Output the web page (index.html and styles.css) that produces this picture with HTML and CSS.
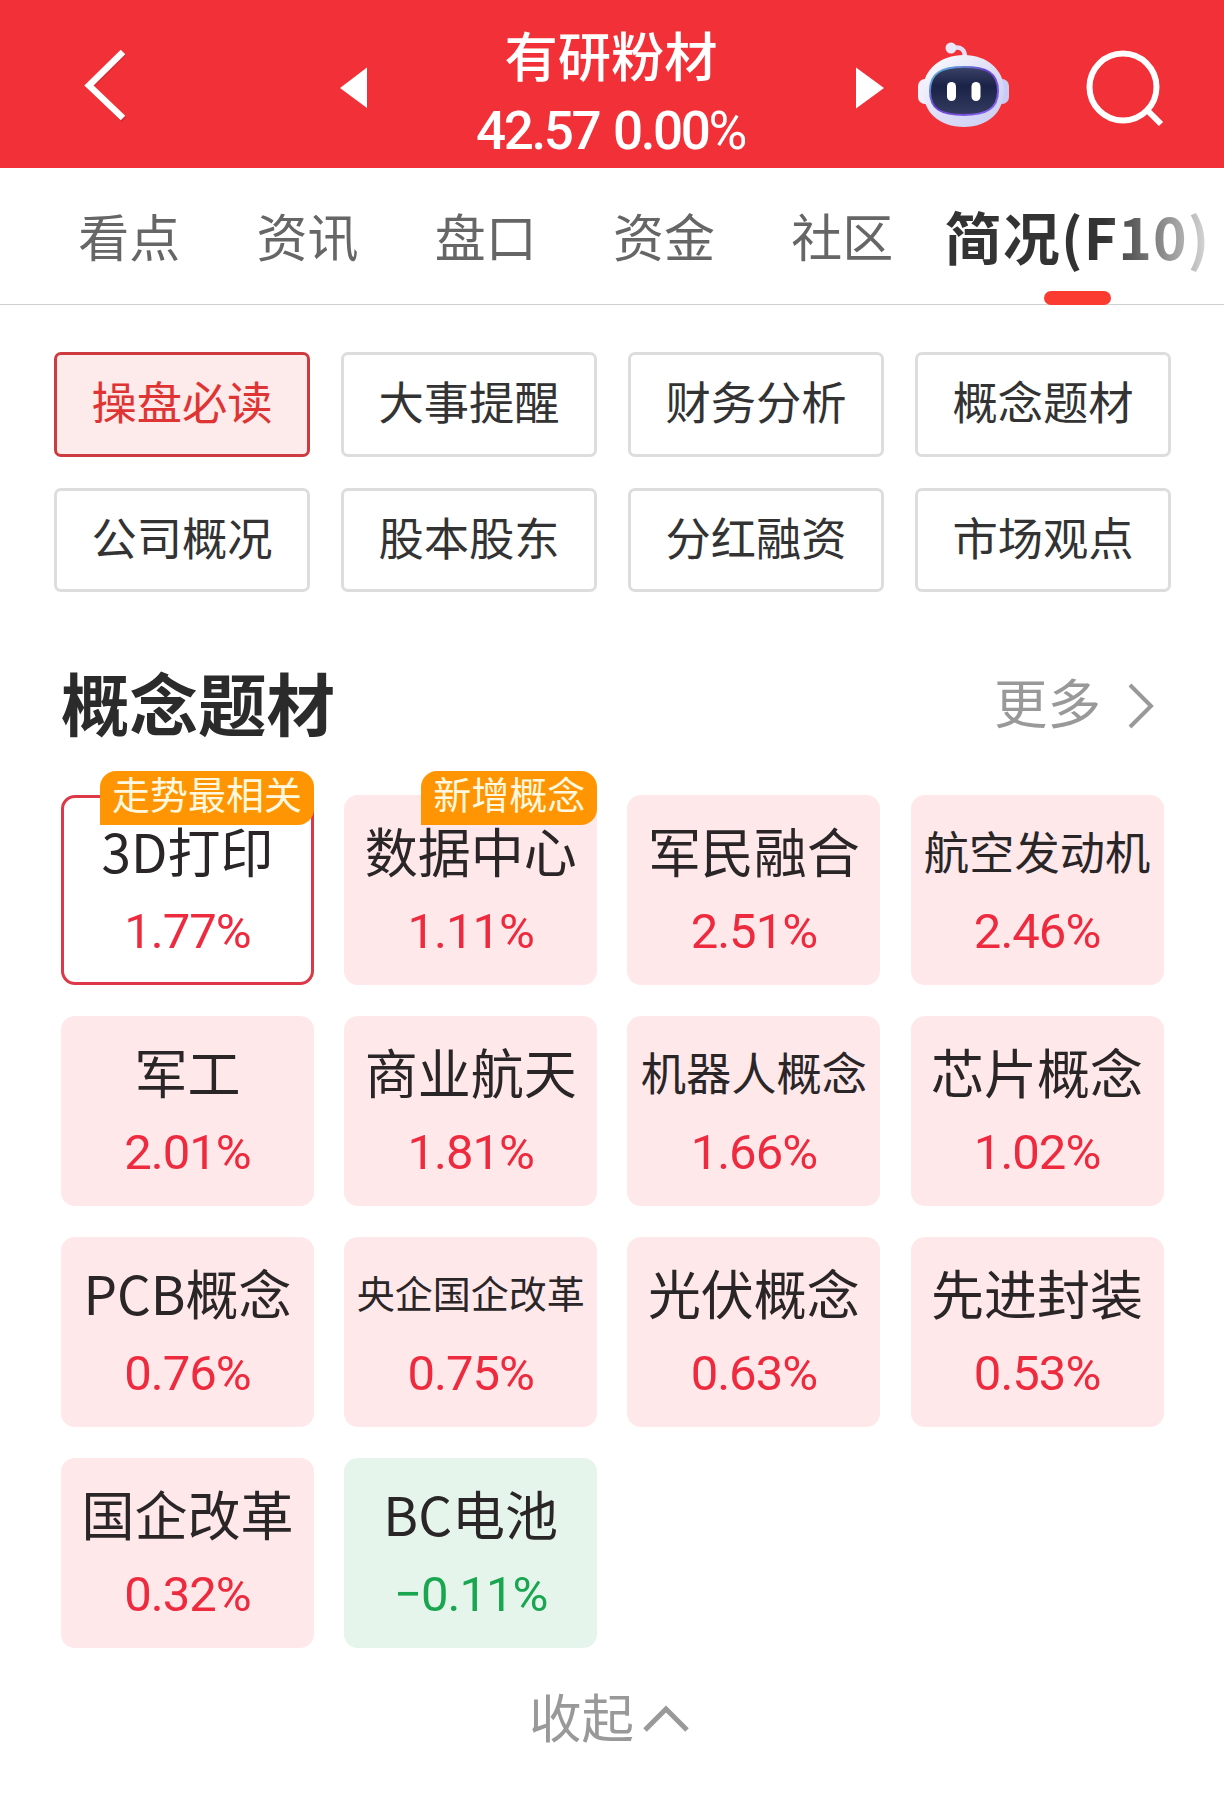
FILE: index.html
```html
<!DOCTYPE html>
<html lang="zh-CN">
  <head>
    <meta charset="UTF-8" />
    <meta name="viewport" content="width=device-width, initial-scale=1.0" />
    <title>有研粉材 - 简况(F10)</title>
    <link rel="stylesheet" href="styles.css">
  </head>

  <body>
    <header class="topbar">
      <svg class="back" width="50" height="80" viewBox="0 0 50 80">
        <path d="M43 11L9 45L43 78" transform="translate(1 -1)" fill="none" stroke="#b5262d" stroke-opacity=".5" stroke-width="6" />
        <path d="M43 9L9 42.500L43 75" fill="none" stroke="#fff" stroke-width="6.500" />
      </svg>
      <svg class="prev" width="28" height="42" viewBox="0 0 28 42"><path d="M27 0.500V41L0 21Z" fill="#fff" /></svg>
      <div class="stock">
        <div class="stock-name">有研粉材</div>
        <div class="stock-price">42.57 0.00<span>%</span></div>
      </div>
      <svg class="next" width="28" height="42" viewBox="0 0 28 42"><path d="M0 0.500V41.500L28 21Z" fill="#fff" /></svg>
      <svg class="robot" width="94" height="86" viewBox="0 0 94 86">
        <defs>
          <linearGradient id="shell" x1="0" y1="0" x2="1" y2="1">
            <stop offset="0" stop-color="#fff" />
            <stop offset=".55" stop-color="#dcdcf6" />
            <stop offset="1" stop-color="#c9cdf2" />
          </linearGradient>
          <linearGradient id="face" x1="0" y1="0" x2="0" y2="1">
            <stop offset="0" stop-color="#3a4266" />
            <stop offset=".4" stop-color="#1a2347" />
            <stop offset="1" stop-color="#343c60" />
          </linearGradient>
          <linearGradient id="rim" x1="0" y1="0" x2="1" y2="1">
            <stop offset="0" stop-color="#5cc9dc" />
            <stop offset=".45" stop-color="#6a3fd0" />
            <stop offset="1" stop-color="#8a68ee" />
          </linearGradient>
        </defs>
        <path d="M36 6C44 4 48 8 48 15" fill="none" stroke="#e3dff5" stroke-width="4.500" />
        <circle cx="34" cy="6" r="5.500" fill="#ebe6f8" />
        <rect x="1" y="37" width="16" height="25" rx="7" fill="#f1effc" />
        <rect x="76" y="37" width="16" height="25" rx="7" fill="#c9ccf4" />
        <path d="M47 13C70 13 87 28 87 48C87 70 71 85 47 85C22 85 6 70 6 48C6 28 23 13 47 13Z" fill="url(#shell)" />
        <path d="M47 25C70 25 81 31 81 49C81 67 69 73 47 73C24 73 13 67 13 49C13 31 24 25 47 25Z" fill="url(#face)" stroke="url(#rim)" stroke-width="2" />
        <rect x="30" y="40" width="9" height="19" rx="4.500" fill="#fff" />
        <rect x="54.500" y="40" width="9" height="19" rx="4.500" fill="#fff" />
      </svg>
      <svg class="search" width="80" height="80" viewBox="0 0 80 80" fill="none" stroke="#fff" stroke-width="6">
        <circle cx="37" cy="37" r="33.500" />
        <path d="M61 60L75 74" />
      </svg>
    </header>

    <nav class="tabs">
      <a class="tab">看点</a>
      <a class="tab">资讯</a>
      <a class="tab">盘口</a>
      <a class="tab">资金</a>
      <a class="tab">社区</a>
      <a class="tab active"><span>简况(F10)</span></a>
    </nav>

    <div class="subnav">
      <a class="active">操盘必读</a>
      <a>大事提醒</a>
      <a>财务分析</a>
      <a>概念题材</a>
      <a>公司概况</a>
      <a>股本股东</a>
      <a>分红融资</a>
      <a>市场观点</a>
    </div>

    <section class="concepts">
      <div class="section-head">
        <h2>概念题材</h2>
        <a class="more">更多
          <svg width="28" height="48" viewBox="0 0 28 48"><path d="M3 4L24 25L3 46" fill="none" stroke="#999" stroke-width="4" /></svg>
        </a>
      </div>

      <div class="grid">
        <div class="card related">
          <em class="badge">走势最相关</em>
          <div class="name">3D打印</div>
          <div class="rate">1.77<span>%</span></div>
        </div>
        <div class="card">
          <em class="badge">新增概念</em>
          <div class="name">数据中心</div>
          <div class="rate">1.11<span>%</span></div>
        </div>
        <div class="card">
          <div class="name">军民融合</div>
          <div class="rate">2.51<span>%</span></div>
        </div>
        <div class="card">
          <div class="name medium">航空发动机</div>
          <div class="rate">2.46<span>%</span></div>
        </div>
        <div class="card">
          <div class="name">军工</div>
          <div class="rate">2.01<span>%</span></div>
        </div>
        <div class="card">
          <div class="name">商业航天</div>
          <div class="rate">1.81<span>%</span></div>
        </div>
        <div class="card">
          <div class="name medium">机器人概念</div>
          <div class="rate">1.66<span>%</span></div>
        </div>
        <div class="card">
          <div class="name">芯片概念</div>
          <div class="rate">1.02<span>%</span></div>
        </div>
        <div class="card">
          <div class="name">PCB概念</div>
          <div class="rate">0.76<span>%</span></div>
        </div>
        <div class="card">
          <div class="name small">央企国企改革</div>
          <div class="rate">0.75<span>%</span></div>
        </div>
        <div class="card">
          <div class="name">光伏概念</div>
          <div class="rate">0.63<span>%</span></div>
        </div>
        <div class="card">
          <div class="name">先进封装</div>
          <div class="rate">0.53<span>%</span></div>
        </div>
        <div class="card">
          <div class="name">国企改革</div>
          <div class="rate">0.32<span>%</span></div>
        </div>
        <div class="card down">
          <div class="name">BC电池</div>
          <div class="rate">−0.11<span>%</span></div>
        </div>
      </div>

      <div class="collapse">收起
        <svg width="46" height="30" viewBox="0 0 46 30"><path d="M2 27L23 6L44 27" fill="none" stroke="#999" stroke-width="5" /></svg>
      </div>
    </section>
  </body>
</html>
```
FILE: styles.css
```css
* {
  box-sizing: border-box;
}

body {
  margin: 0;
  background-color: #fff;
  font-family: "Noto Sans CJK SC", sans-serif;
  color: #333;
}

/* top bar */
.topbar {
  display: flex;
  align-items: flex-start;
  height: 168px;
  background-color: #f23037;
  color: #fff;
}
.topbar svg {
  flex: none;
}
.back {
  margin: 43px 0 0 80px;
}
.prev {
  margin: 67px 0 0 210px;
}
.stock {
  width: 488px;
  text-align: center;
}
.stock-name {
  font-size: 53.3px;
  font-weight: 500;
  line-height: 60px;
  margin-top: 24px;
  padding-right: 2px;
}
.stock-price {
  font-family: Roboto, sans-serif;
  font-size: 53px;
  font-weight: 500;
  line-height: 60px;
  margin-top: 17px;
  padding-right: 3px;
  letter-spacing: -2.4px;
  word-spacing: 3px;
}
.stock-price span {
  font-weight: 400;
}
.next {
  margin-top: 67px;
}
.robot {
  margin: 42px 0 0 33px;
}
.search {
  margin: 50px 0 0 75px;
}

/* tabs */
.tabs {
  display: flex;
  height: 137px;
  padding-left: 40px;
  border-bottom: 1px solid #cfcfcf;
}
.tab {
  flex: none;
  width: 178.3px;
  text-align: center;
  font-size: 51px;
  line-height: 134px;
  color: #666;
}
.tab.active {
  position: relative;
  width: 292px;
  padding-left: 13px;
  text-align: left;
  font-size: 57px;
  font-weight: 700;
  letter-spacing: 1.2px;
}
.tab.active span {
  background: linear-gradient(to right, #333 60%, #666 73%, #999 85%, #ddd 100%);
  -webkit-background-clip: text;
  background-clip: text;
  color: transparent;
}
.tab.active::after {
  content: "";
  position: absolute;
  left: 113px;
  bottom: -1px;
  width: 67px;
  height: 14px;
  border-radius: 7px;
  background-color: #fc3b30;
}

/* sub navigation */
.subnav {
  display: grid;
  grid-template-columns: repeat(4, 256px);
  gap: 31px;
  padding: 47px 54px 0;
}
.subnav a {
  height: 104.5px;
  border: 3px solid #ddd;
  border-radius: 7px;
  text-align: center;
  font-size: 45.3px;
  line-height: 90px;
}
.subnav a.active {
  border-color: #cd3a40;
  background-color: #fdeaea;
  color: #df3434;
}

/* concepts */
.section-head {
  display: flex;
  justify-content: space-between;
  height: 203px;
  padding: 60px 69px 0 61px;
}
.section-head h2 {
  margin: 0;
  font-size: 68.5px;
  line-height: 100px;
  font-weight: 700;
  color: #2b2b2b;
}
.more {
  display: flex;
  font-size: 53.5px;
  line-height: 98px;
  color: #999;
}
.more svg {
  margin: 29px 0 0 26px;
}
.grid {
  display: grid;
  grid-template-columns: repeat(4, 253px);
  gap: 31px 30.2px;
  padding: 0 61px;
}
.card {
  position: relative;
  height: 190px;
  padding-top: 20px;
  border-radius: 14px;
  background-color: #ffe8ea;
  text-align: center;
  white-space: nowrap;
}
.card.related {
  padding-top: 17px;
  border: 3px solid #dc3848;
  background-color: #fff;
}
.name {
  font-size: 53px;
  line-height: 70px;
  color: #2a2628;
}
.name.medium {
  font-size: 45.3px;
}
.name.small {
  font-size: 38px;
}
.rate {
  margin-top: 17px;
  font-family: Roboto, sans-serif;
  font-size: 49px;
  line-height: 60px;
  letter-spacing: -1px;
  color: #ee2b3e;
}
.card.down {
  background-color: #e5f5eb;
}
.down .rate {
  color: #1aa650;
}
.badge {
  position: absolute;
  top: -24px;
  right: 0;
  height: 54px;
  padding: 0 12px;
  border-radius: 16px 16px 16px 0;
  background-color: #ff9502;
  color: #fff8de;
  font-size: 38px;
  font-style: normal;
  line-height: 43px;
}
.related .badge {
  top: -27px;
  right: -3px;
}

.collapse {
  display: flex;
  justify-content: center;
  margin-top: 24px;
  padding-right: 6px;
  font-size: 52.5px;
  line-height: 86px;
  color: #999;
}
.collapse svg {
  margin: 31px 0 0 9px;
}
```
